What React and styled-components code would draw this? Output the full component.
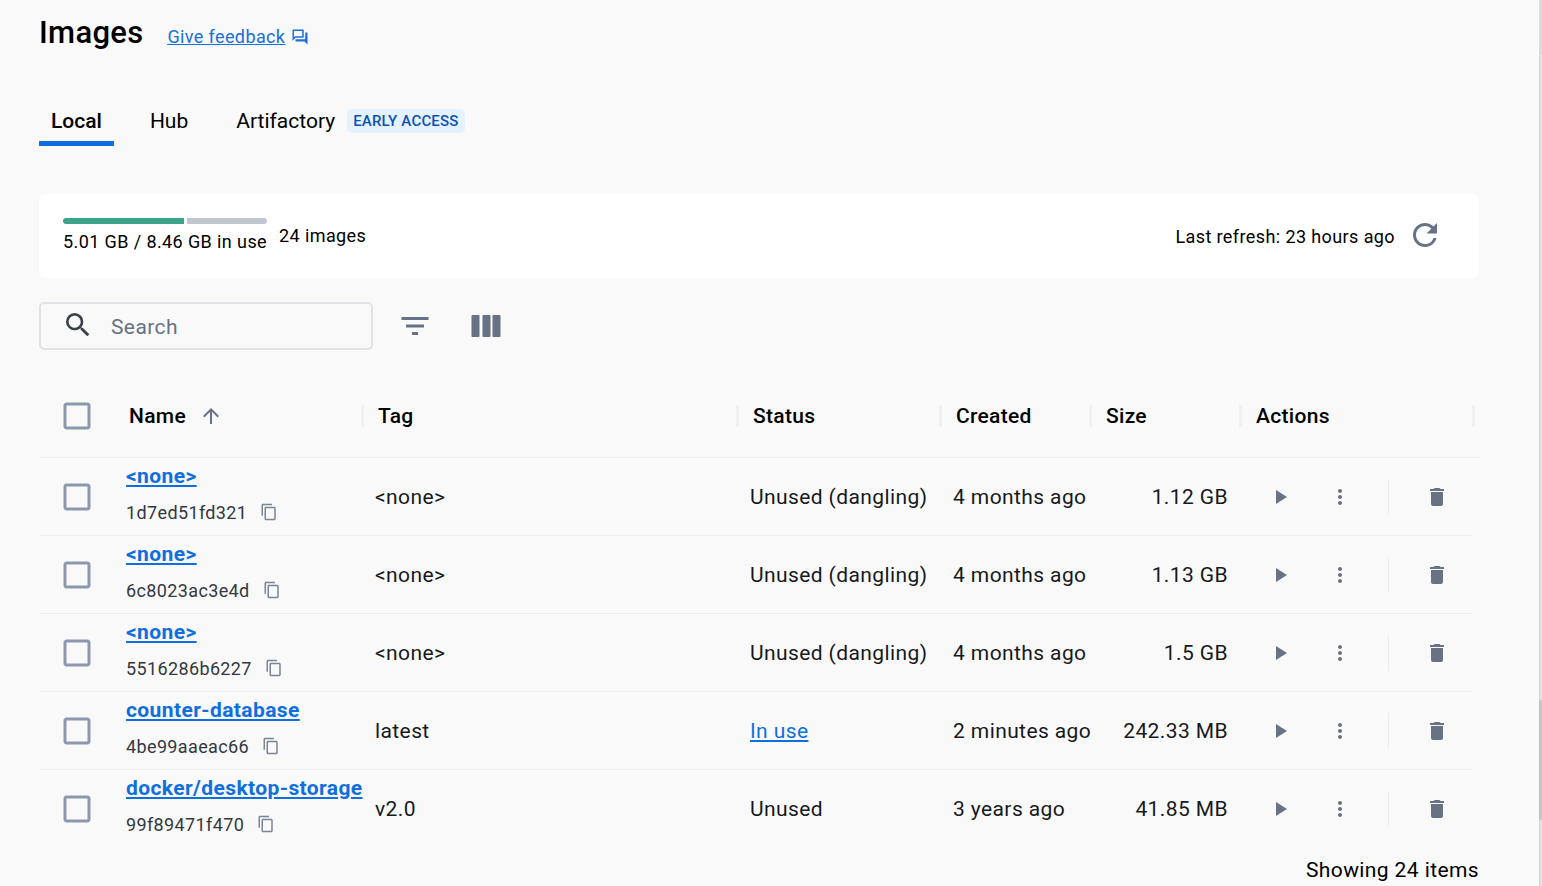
import { createGlobalStyle, styled } from 'styled-components';
import {
  MdArrowUpward,
  MdCheckBoxOutlineBlank,
  MdDelete,
  MdFilterList,
  MdMoreVert,
  MdOutlineContentCopy,
  MdOutlineForum,
  MdPlayArrow,
  MdRefresh,
  MdSearch,
} from 'react-icons/md';

const images = [
  { name: '<none>', id: '1d7ed51fd321', tag: '<none>', status: 'Unused (dangling)', created: '4 months ago', size: '1.12 GB' },
  { name: '<none>', id: '6c8023ac3e4d', tag: '<none>', status: 'Unused (dangling)', created: '4 months ago', size: '1.13 GB' },
  { name: '<none>', id: '5516286b6227', tag: '<none>', status: 'Unused (dangling)', created: '4 months ago', size: '1.5 GB' },
  { name: 'counter-database', id: '4be99aaeac66', tag: 'latest', status: 'In use', created: '2 minutes ago', size: '242.33 MB', inUse: true },
  { name: 'docker/desktop-storage', id: '99f89471f470', tag: 'v2.0', status: 'Unused', created: '3 years ago', size: '41.85 MB' },
];

function ColumnsIcon() {
  return (
    <svg width="30" height="22" viewBox="0 0 30 22" fill="currentColor">
      <rect x="0.5" width="8" height="22" rx="1" />
      <rect x="11.5" width="8" height="22" rx="1" />
      <rect x="21.5" width="8" height="22" rx="1" />
    </svg>
  );
}

function App() {
  return (
    <>
      <GlobalStyle />
      <Page>
        <Header>
          <Title>Images</Title>
          <Feedback href="#">
            <span>Give feedback</span>
            <MdOutlineForum size={18} />
          </Feedback>
        </Header>

        <Tabs>
          <Tab $active>Local</Tab>
          <Tab>Hub</Tab>
          <Tab>
            Artifactory
            <Badge>EARLY ACCESS</Badge>
          </Tab>
        </Tabs>

        <Summary>
          <Usage>
            <Meter>
              <MeterUsed />
              <MeterFree />
            </Meter>
            <span>5.01 GB / 8.46 GB in use</span>
          </Usage>
          <Count>24 images</Count>
          <Refresh>
            <RefreshText>Last refresh: 23 hours ago</RefreshText>
            <MdRefresh size={36} />
          </Refresh>
        </Summary>

        <Toolbar>
          <SearchBox>
            <MdSearch size={32} />
            <span>Search</span>
          </SearchBox>
          <FilterButton><MdFilterList size={36} /></FilterButton>
          <ColumnsButton><ColumnsIcon /></ColumnsButton>
        </Toolbar>

        <Table>
          <HeadRow>
            <CheckCell><Check size={36} /></CheckCell>
            <HeadCell $first>
              Name
              <MdArrowUpward size={24} />
            </HeadCell>
            <HeadCell>Tag</HeadCell>
            <HeadCell>Status</HeadCell>
            <HeadCell>Created</HeadCell>
            <HeadCell>Size</HeadCell>
            <HeadCell>Actions</HeadCell>
          </HeadRow>

          {images.map((image) => (
            <Row key={image.id}>
              <CheckCell><Check size={36} /></CheckCell>
              <NameCell>
                <NameLink href="#">{image.name}</NameLink>
                <IdLine>
                  {image.id}
                  <MdOutlineContentCopy size={18} />
                </IdLine>
              </NameCell>
              <Cell>{image.tag}</Cell>
              <Cell>{image.inUse ? <StatusLink href="#">{image.status}</StatusLink> : image.status}</Cell>
              <Cell>{image.created}</Cell>
              <SizeCell>{image.size}</SizeCell>
              <ActionCell>
                <PlayIcon><MdPlayArrow size={24} /></PlayIcon>
                <MoreIcon><MdMoreVert size={24} /></MoreIcon>
                <ActionDivider />
                <MdDelete size={24} />
              </ActionCell>
            </Row>
          ))}
        </Table>

        <Footer>Showing 24 items</Footer>
      </Page>
      <Scrollbar>
        <ScrollTop />
        <ScrollThumb />
      </Scrollbar>
    </>
  );
}

const GlobalStyle = createGlobalStyle`
  html, body {
    margin: 0;
    height: 100%;
    overflow: hidden;
    background: #f9f9fa;
  }
  body {
    font-family: Roboto, "Liberation Sans", sans-serif;
    color: #000;
  }
`;

const Page = styled.main`
  box-sizing: border-box;
  width: 1518px;
  padding: 0 0 0 39px;
`;

const Header = styled.header`
  display: flex;
  align-items: center;
  gap: 24px;
  height: 66px;
`;

const Title = styled.h1`
  margin: 0;
  font-size: 31px;
  font-weight: 500;
  letter-spacing: 0.3px;
  line-height: 64px;
`;

const Feedback = styled.a`
  display: flex;
  align-items: center;
  gap: 6px;
  margin-top: 7px;
  font-size: 18px;
  letter-spacing: 0.38px;
  color: #1a6fd8;
  span {
    text-decoration: underline;
  }
`;

const Tabs = styled.nav`
  display: flex;
  margin-top: 30px;
  height: 50px;
`;

const Tab = styled.div`
  display: flex;
  align-items: center;
  box-sizing: border-box;
  height: 50px;
  padding: 4px 12px 0 ${(p) => (p.$active ? '12px' : '36px')};
  font-size: 21px;
  font-weight: ${(p) => (p.$active ? 500 : 400)};
  border-bottom: 5px solid ${(p) => (p.$active ? '#0f6fde' : 'transparent')};
`;

const Badge = styled.span`
  margin-left: 12px;
  padding: 0 6px;
  height: 24px;
  line-height: 24px;
  border-radius: 5px;
  background: #e5f2fc;
  color: #0b52b5;
  font-size: 15px;
  font-weight: 500;
  letter-spacing: 0.2px;
`;

const Summary = styled.section`
  display: flex;
  align-items: center;
  box-sizing: border-box;
  width: 1440px;
  height: 84px;
  margin-top: 48px;
  padding: 0 36px 2px 24px;
  background: #fff;
  border-radius: 6px;
  font-size: 18px;
  letter-spacing: 0.4px;
`;

const Usage = styled.div`
  display: flex;
  flex-direction: column;
  gap: 7px;
  margin-top: -1px;
`;

const Meter = styled.div`
  display: flex;
  gap: 3px;
  height: 6px;
`;

const MeterUsed = styled.div`
  width: 121px;
  background: #3da38b;
  border-radius: 3px 0 0 3px;
`;

const MeterFree = styled.div`
  flex: 1;
  background: #c1c5ce;
  border-radius: 0 3px 3px 0;
`;

const Count = styled.div`
  margin-left: 12px;
`;

const Refresh = styled.div`
  display: flex;
  align-items: center;
  gap: 12px;
  margin-left: auto;
  svg {
    color: #677285;
  }
`;

const RefreshText = styled.span`
  padding-top: 2px;
`;

const Toolbar = styled.div`
  display: flex;
  align-items: center;
  margin-top: 24px;
`;

const SearchBox = styled.div`
  display: flex;
  align-items: center;
  gap: 17px;
  box-sizing: border-box;
  width: 334px;
  height: 48px;
  padding-left: 21px;
  border: 2px solid #e1e2e6;
  border-radius: 5px;
  font-size: 21px;
  letter-spacing: 0.4px;
  color: #677285;
  svg {
    color: #3a4048;
    margin-top: -2px;
  }
  span {
    padding-top: 2px;
  }
`;

const FilterButton = styled.div`
  display: flex;
  margin-left: 24px;
  color: #677285;
`;

const ColumnsButton = styled.div`
  display: flex;
  margin-left: 38px;
  color: #677285;
`;

const Table = styled.div`
  width: 1440px;
  margin-top: 25px;
`;

const HeadRow = styled.div`
  display: grid;
  grid-template-columns: 75px 249px 375px 203px 150px 150px 238px;
  align-items: center;
  height: 83px;
  border-bottom: 1px solid #ededef;
  box-sizing: border-box;
`;

const Row = styled.div`
  display: grid;
  grid-template-columns: 75px 249px 375px 203px 150px 150px 232px;
  align-items: center;
  box-sizing: border-box;
  width: 1434px;
  height: 78px;
  padding-top: 1px;
  border-bottom: 1px solid #ededef;
  font-size: 21px;
  letter-spacing: 0.4px;
  &:last-child {
    border-bottom-color: transparent;
  }
`;

const CheckCell = styled.div`
  display: flex;
  padding-left: 20px;
`;

const Check = styled(MdCheckBoxOutlineBlank)`
  color: #8e98ac;
`;

const HeadCell = styled.div`
  display: flex;
  align-items: center;
  gap: 13px;
  box-sizing: border-box;
  height: 22px;
  margin-left: ${(p) => (p.$first ? '0' : '-2px')};
  padding-left: ${(p) => (p.$first ? '15px' : '14px')};
  border-left: ${(p) => (p.$first ? 'none' : '3px solid #f0f0f2')};
  font-size: 21px;
  font-weight: 500;
  letter-spacing: 0.3px;
  &:last-child {
    width: 236px;
    border-right: 3px solid #f0f0f2;
  }
  svg {
    color: #677285;
  }
`;

const Cell = styled.div`
  padding-left: 12px;
  white-space: nowrap;
  color: #17191c;
`;

const NameCell = styled.div`
  display: flex;
  flex-direction: column;
  gap: 14px;
  padding: 0 0 8px 12px;
`;

const NameLink = styled.a`
  font-weight: 700;
  color: #0f6fde;
  text-decoration: underline;
  line-height: 24px;
  white-space: nowrap;
`;

const IdLine = styled.div`
  display: flex;
  align-items: center;
  gap: 13px;
  font-size: 18px;
  letter-spacing: 0.37px;
  line-height: 21px;
  color: #33383f;
  svg {
    color: #7a8496;
  }
`;

const StatusLink = styled.a`
  color: #0f6fde;
  text-decoration: underline;
`;

const SizeCell = styled.div`
  padding-right: 13px;
  text-align: right;
  color: #17191c;
`;

const ActionCell = styled.div`
  display: flex;
  align-items: center;
  color: #677285;
`;

const PlayIcon = styled.div`
  display: flex;
  margin-left: 27px;
`;

const MoreIcon = styled.div`
  display: flex;
  margin-left: 36px;
`;

const ActionDivider = styled.div`
  width: 1px;
  height: 36px;
  margin: 0 36px;
  background: #ececee;
`;

const Footer = styled.div`
  width: 1440px;
  margin-top: 10px;
  text-align: right;
  font-size: 21px;
  letter-spacing: 0.4px;
`;

const Scrollbar = styled.div`
  position: fixed;
  top: 0;
  right: 0;
  box-sizing: border-box;
  width: 3px;
  height: 100%;
  background: #e4e4e4;
  border-left: 1px solid #d4d4d4;
`;

const ScrollTop = styled.div`
  position: absolute;
  top: 0;
  left: -1px;
  width: 3px;
  height: 55px;
  background: #dcdcdc;
`;

const ScrollThumb = styled.div`
  position: absolute;
  top: 700px;
  left: -1px;
  width: 3px;
  height: 120px;
  background: #c4c4c4;
`;

export default App;
